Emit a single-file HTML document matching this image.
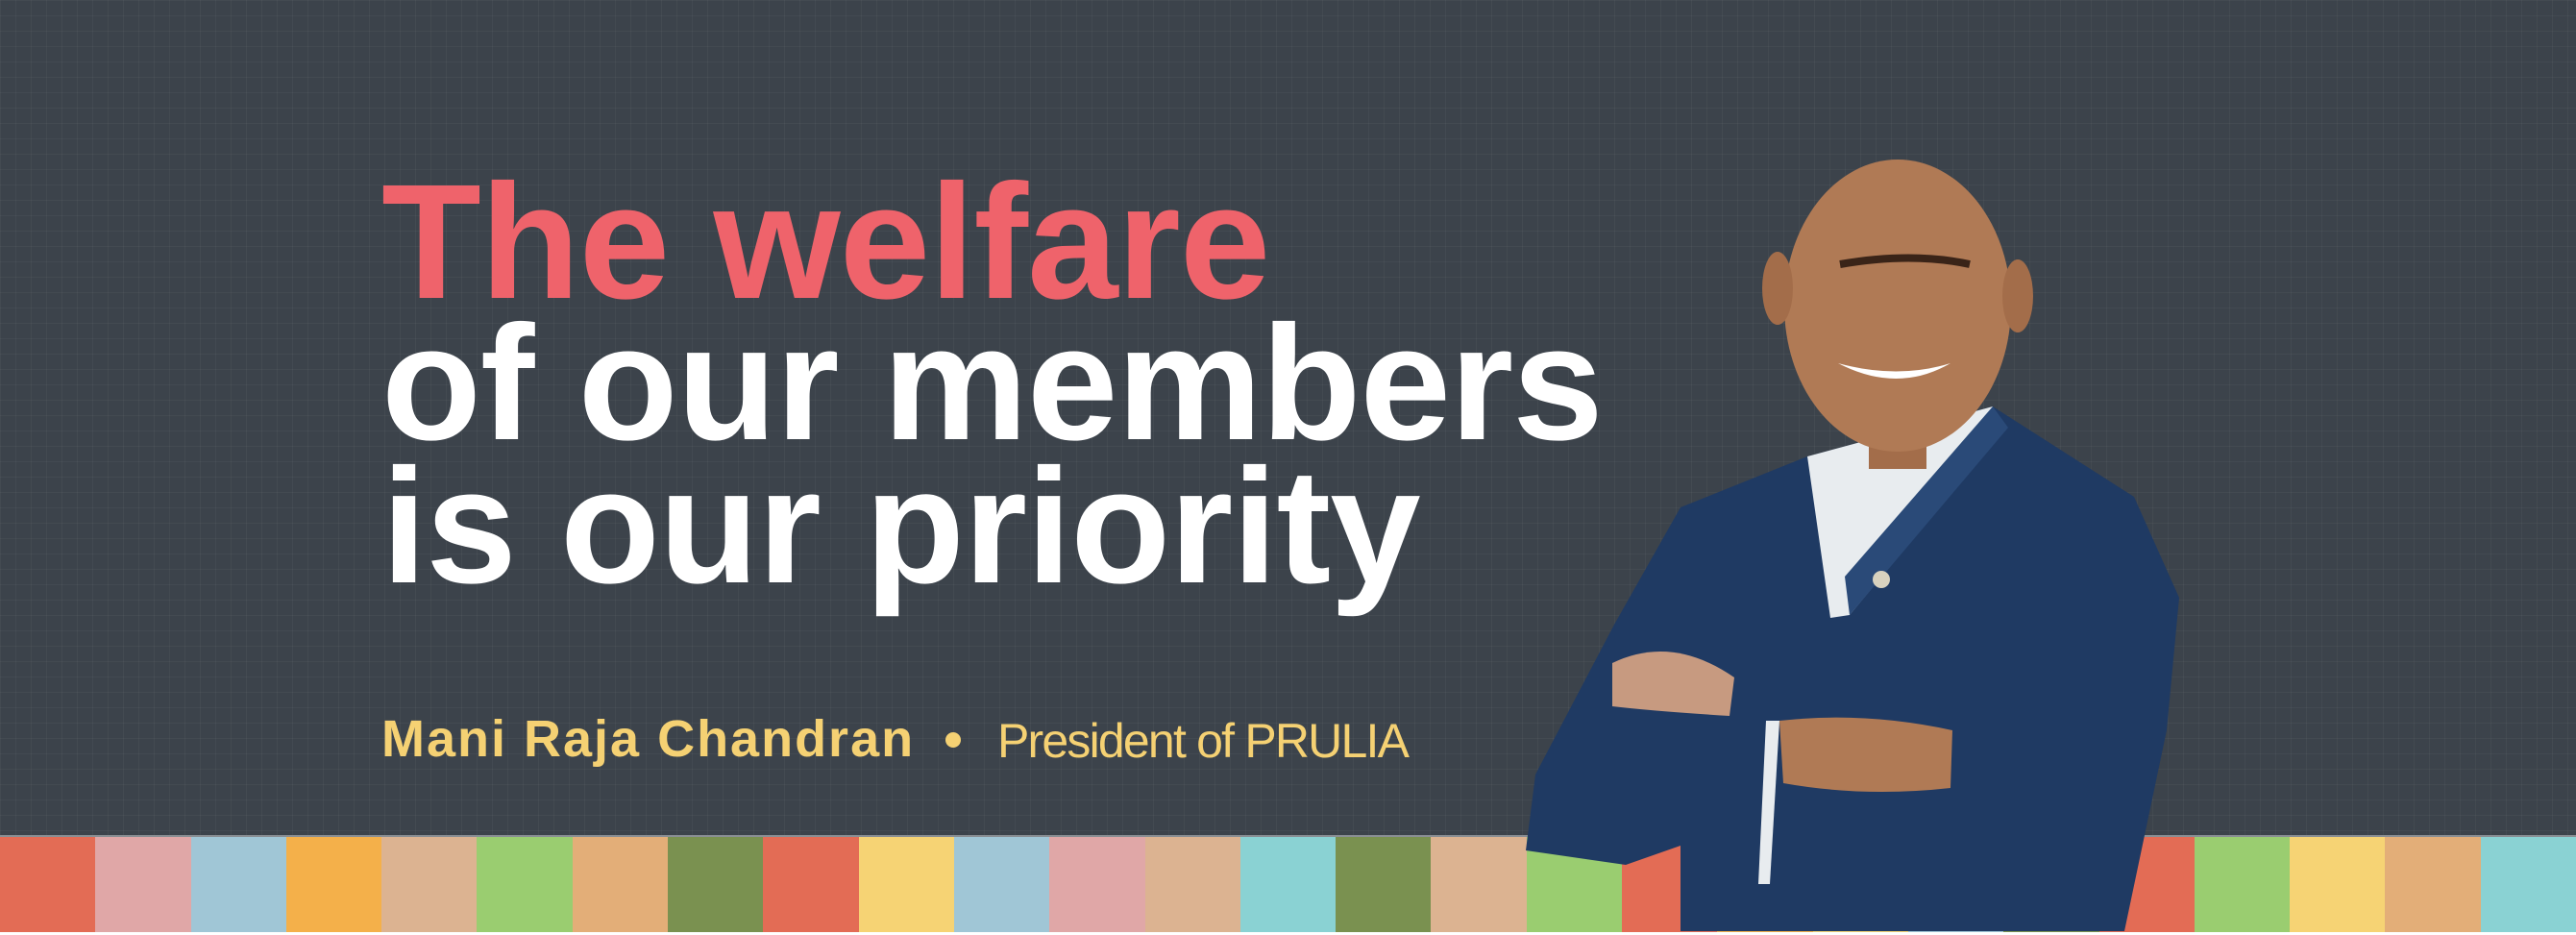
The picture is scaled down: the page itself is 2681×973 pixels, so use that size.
<!DOCTYPE html>
<html><head><meta charset="utf-8"><style>
html,body{margin:0;padding:0}
body{width:2681px;height:973px;position:relative;overflow:hidden;background:#3c434b;
background-image:linear-gradient(90deg,rgba(255,255,255,.035) 1px,transparent 1px),linear-gradient(rgba(255,255,255,.035) 1px,transparent 1px);background-size:16px 16px;font-family:"Liberation Sans",sans-serif}
.h{position:absolute;left:397px;font-weight:bold;font-size:170px;line-height:1;white-space:nowrap;letter-spacing:-1px}
.stripes{position:absolute;left:0;top:869px;height:101px;width:2681px;display:flex;border-top:2px solid #8a8f94}
.stripes div{width:99.3px;height:101px;flex:none}
.cap{position:absolute;top:740px;font-size:52px;color:#f5d173;white-space:nowrap}
</style></head><body>
<div class="h" style="top:167px;color:#ef636b">The welfare</div>
<div class="h" style="top:314px;color:#fff">of our members</div>
<div class="h" style="top:463px;color:#fff">is our priority</div>
<div class="cap" style="left:397px;font-weight:bold;font-size:54px;letter-spacing:2px;top:738px">Mani Raja Chandran</div>
<div style="position:absolute;left:984px;top:762px;width:16px;height:16px;border-radius:50%;background:#f5d173"></div>
<div class="cap" style="left:1038px;font-size:50px;letter-spacing:-1.8px;top:742px">President of PRULIA</div>
<div class="stripes">
<div style="background:#e36c55"></div><div style="background:#e0a7a7"></div><div style="background:#a0c6d6"></div><div style="background:#f4b04a"></div><div style="background:#dcb391"></div><div style="background:#9acd70"></div><div style="background:#e3ae78"></div><div style="background:#7a9150"></div><div style="background:#e36c55"></div><div style="background:#f6d374"></div><div style="background:#a0c6d6"></div><div style="background:#e0a7a7"></div><div style="background:#dcb391"></div><div style="background:#8ad2d3"></div><div style="background:#7a9150"></div><div style="background:#dcb391"></div><div style="background:#9acd70"></div><div style="background:#e36c55"></div><div style="background:#f4b04a"></div><div style="background:#f6d374"></div><div style="background:#a0c6d6"></div><div style="background:#7a9150"></div><div style="background:#e36c55"></div><div style="background:#9acd70"></div><div style="background:#f6d374"></div><div style="background:#e3ae78"></div><div style="background:#8ad2d3"></div>
</div>
<div style="position:absolute;left:0;top:970px;width:2681px;height:3px;background:#fff"></div>
<svg style="position:absolute;left:0;top:0" width="2681" height="973" viewBox="0 0 2681 973">
<path d="M1749 528 L1881 475 L2074 423 L2221 517 L2268 622 L2255 760 L2211 969 L1749 969 L1749 880 L1692 900 L1588 885 L1598 806 L1680 650 Z" fill="#1f3a63"/>
<path d="M1881 475 L2074 423 L2075 460 L1925 640 L1905 643 Z" fill="#e8ecef"/>
<path d="M2074 423 L2090 445 L1925 640 L1920 600 Z" fill="#2a4a78"/>
<rect x="1945" y="448" width="60" height="40" fill="#a36d4a"/>
<ellipse cx="1975" cy="318" rx="118" ry="152" fill="#b07a55"/>
<ellipse cx="1850" cy="300" rx="16" ry="38" fill="#a36d4a"/>
<ellipse cx="2100" cy="308" rx="16" ry="38" fill="#a36d4a"/>
<path d="M1915 275 Q1990 262 2050 275" stroke="#3a2418" stroke-width="8" fill="none"/>
<path d="M1913 378 Q1975 410 2030 378 Q1975 395 1913 378Z" fill="#fff"/>
<path d="M1678 690 Q1740 660 1805 705 L1800 745 Q1720 740 1678 735 Z" fill="#c79a80"/>
<path d="M1852 750 Q1940 740 2032 760 L2030 820 Q1940 830 1856 815 Z" fill="#b07a55"/>
<path d="M1838 750 L1852 750 L1842 920 L1830 920 Z" fill="#e8ecef"/>
<circle cx="1958" cy="603" r="9" fill="#d8d2bf"/>
</svg>
</body></html>
